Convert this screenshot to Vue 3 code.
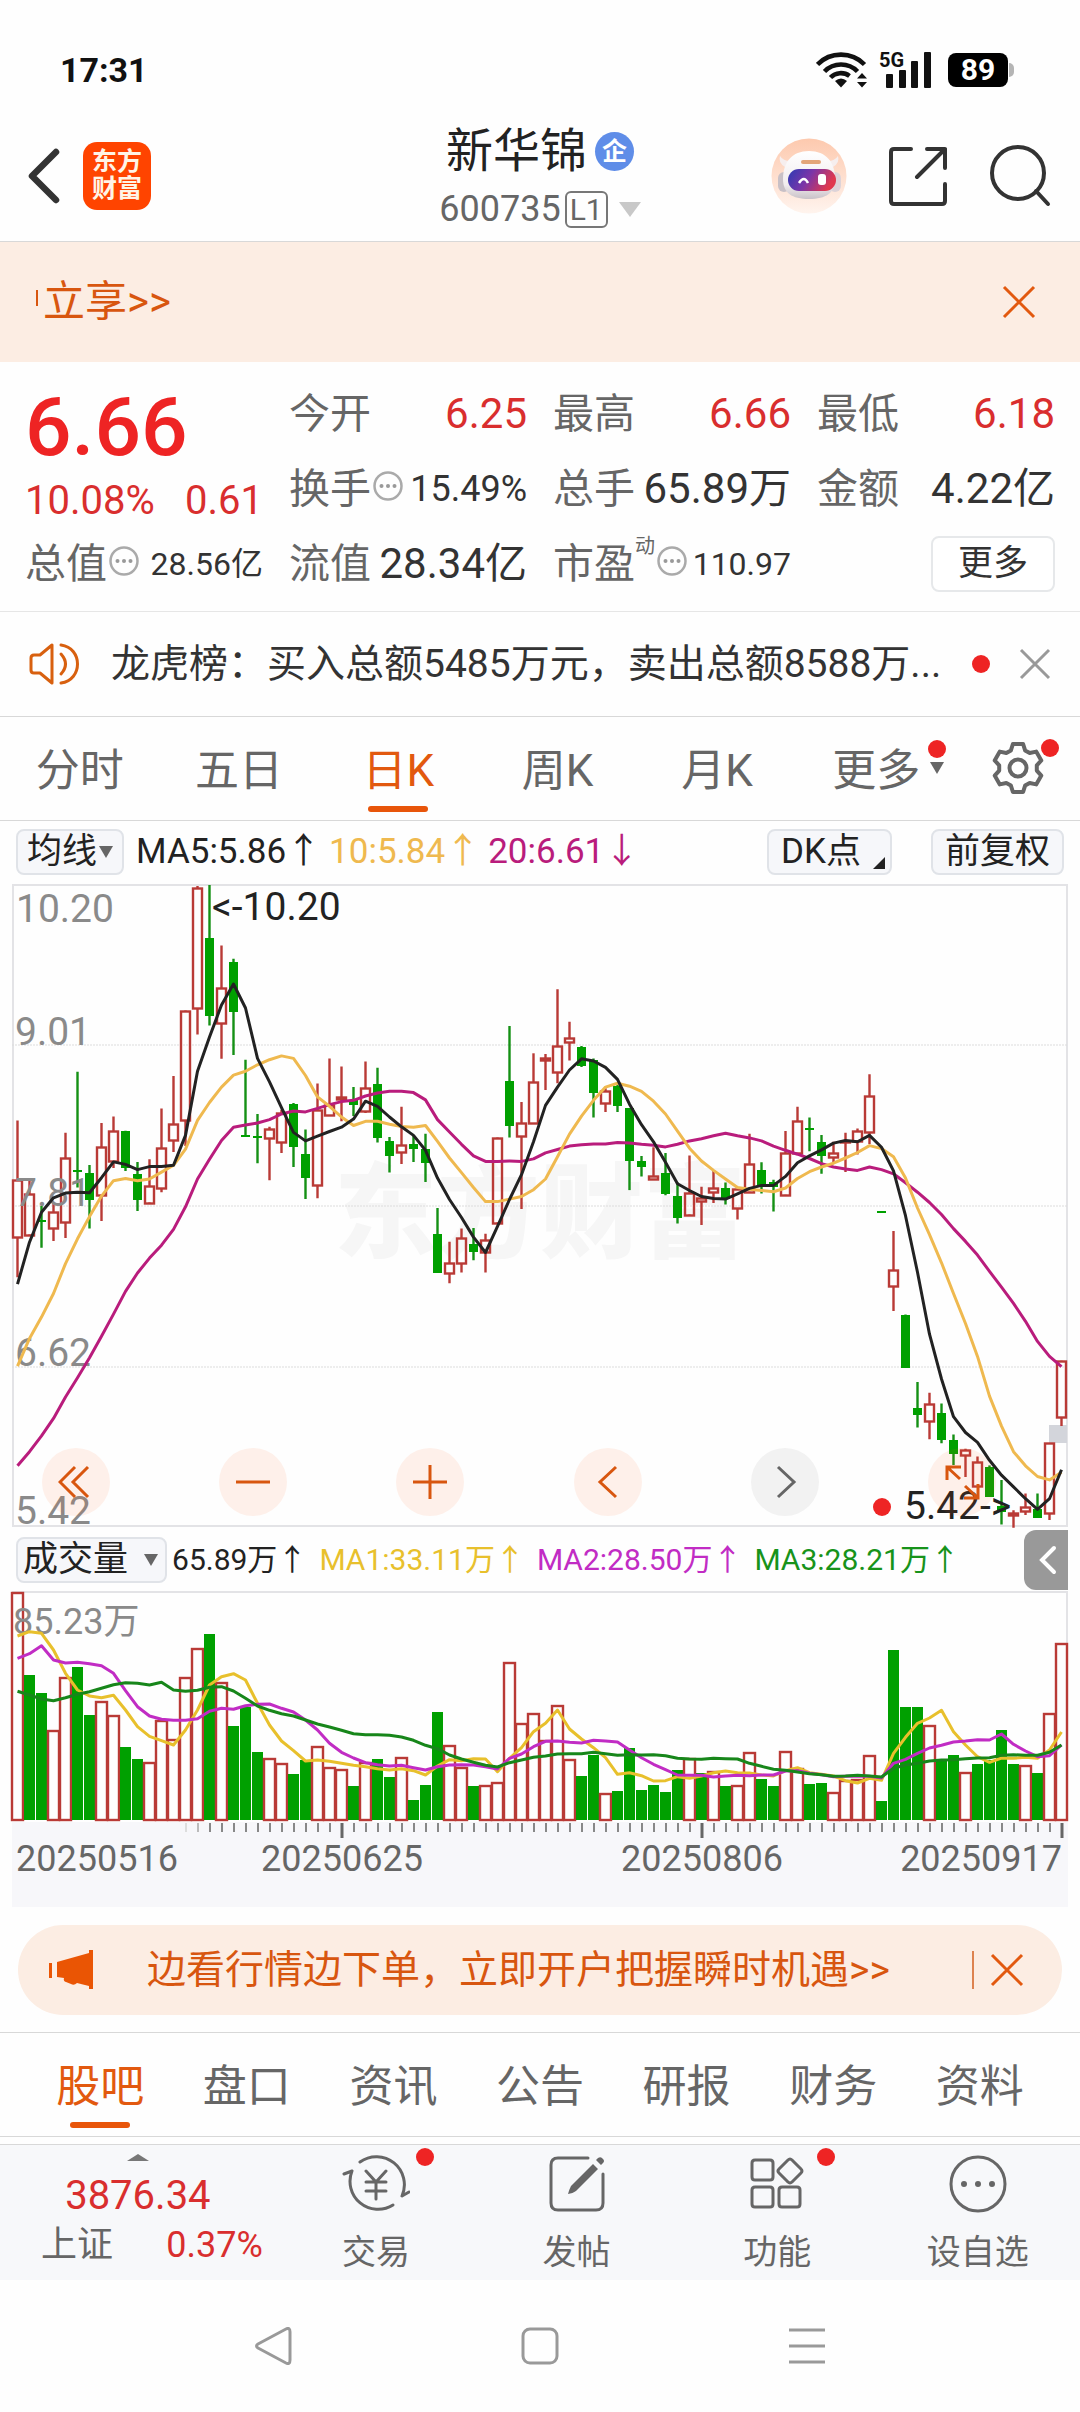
<template>
  <div class="page">
    <header class="status">
      <span class="time">17:31</span>
      <div class="status-icons">
        <svg class="wifi" width="52" height="36" viewBox="0 0 52 36" fill="none" stroke="#111" stroke-width="4.6">
          <path d="M1.5 12.5a33 33 0 0 1 47 0" />
          <path d="M8.5 19.5a23 23 0 0 1 33 0" />
          <path d="M14.5 25.5a14.500 14.500 0 0 1 19-1.500" />
          <path d="M25 35.500l-6-6.500q6-5 12 0z" fill="#111" stroke="none" />
          <path d="M46 21l5 5.500h-10zM46 35.500l5-5.500h-10z" fill="#111" stroke="none" />
        </svg>
        <div class="signal">
          <span class="net">5G</span>
          <svg width="52" height="38" viewBox="0 0 52 38" fill="#111">
            <rect x="6" y="23" width="7" height="14" rx="1" />
            <rect x="19" y="19" width="7" height="18" rx="1" />
            <rect x="31" y="10" width="7" height="27" rx="1" />
            <rect x="44" y="1" width="7" height="36" rx="1" />
          </svg>
        </div>
        <span class="battery">89</span>
      </div>
    </header>

    <div class="header">
      <div class="header-left">
        <button class="plain" aria-label="返回">
          <svg width="36" height="60" viewBox="0 0 36 60" fill="none" stroke="#333" stroke-width="6.500" stroke-linecap="round" stroke-linejoin="round">
            <path d="M31 6L7 30l24 24" />
          </svg>
        </button>
        <a class="logo" href="#"><span>东方</span><span>财富</span></a>
      </div>
      <div class="title">
        <h1>新华锦<span class="badge">企</span></h1>
        <button class="plain code">600735<span class="level">L1</span><i class="caret light"></i></button>
      </div>
      <div class="header-right">
        <button class="plain" aria-label="助手">
          <svg width="76" height="76" viewBox="0 0 76 76">
            <defs>
              <linearGradient id="halo" x1="0" y1="0" x2="0" y2="1">
                <stop offset="0" stop-color="#fdc9ae" />
                <stop offset="1" stop-color="#fff4ee" />
              </linearGradient>
              <linearGradient id="visor" x1="0" y1="0" x2="1" y2="0.300">
                <stop offset="0" stop-color="#2c3bb4" />
                <stop offset="0.500" stop-color="#7b35a8" />
                <stop offset="1" stop-color="#e0384e" />
              </linearGradient>
              <linearGradient id="shell" x1="0" y1="0" x2="0" y2="1">
                <stop offset="0" stop-color="#ffffff" />
                <stop offset="0.700" stop-color="#f1ecee" />
                <stop offset="1" stop-color="#c9c2c8" />
              </linearGradient>
            </defs>
            <circle cx="38" cy="38" r="37.500" fill="url(#halo)" />
            <path d="M9 18q-2 7 5 11l7-6q-8 1-12-5zM67 18q2 7-5 11l-7-6q8 1 12-5z" fill="#f6eeee" />
            <rect x="7" y="34" width="12" height="20" rx="6" fill="#c8c0c6" />
            <rect x="58" y="34" width="12" height="20" rx="6" fill="#ddd3d8" />
            <path d="M38 13c17 0 26 11 26 28 0 14-9 20-26 20s-26-6-26-20c0-17 9-28 26-28z" fill="url(#shell)" />
            <rect x="17" y="31" width="48" height="22" rx="11" fill="url(#visor)" />
            <rect x="30" y="22" width="20" height="4" rx="2" fill="#e3a679" />
            <path d="M28 45q5-8 9 0" fill="none" stroke="#fff" stroke-width="2.500" />
            <rect x="47" y="36" width="8" height="11" rx="3" fill="#fff" />
          </svg>
        </button>
        <button class="plain" aria-label="分享">
          <svg width="58" height="60" viewBox="0 0 58 60" fill="none" stroke="#333" stroke-width="4" stroke-linecap="round" stroke-linejoin="round">
            <path d="M22 3H5q-3 0-3 3v49q0 3 3 3h48q3 0 3-3V38M38 3h18v19M56 3L28 31" />
          </svg>
        </button>
        <button class="plain" aria-label="搜索">
          <svg width="62" height="62" viewBox="0 0 62 62" fill="none" stroke="#333" stroke-width="4" stroke-linecap="round">
            <circle cx="29" cy="28" r="26" />
            <path d="M47 46l12 13" />
          </svg>
        </button>
      </div>
    </div>

    <div class="banner">
      <a href="#" class="banner-text"><i class="stub"></i>立享&gt;&gt;</a>
      <button class="plain" aria-label="关闭">
        <svg width="34" height="34" viewBox="0 0 34 34" fill="none" stroke="#e2590f" stroke-width="3"><path d="M2 2l30 30M32 2L2 32" /></svg>
      </button>
    </div>

    <section class="quote">
      <div class="price-box">
        <strong class="price">6.66</strong>
        <div class="change"><span>10.08%</span><span>0.61</span></div>
      </div>
      <div v-for="item in quotes" :key="item.label" class="cell">
        <span class="label">{{ item.label }}<sup v-if="item.sup">{{ item.sup }}</sup>
          <svg v-if="item.tip" width="30" height="30" viewBox="0 0 30 30" fill="none" stroke="#aaa" stroke-width="2.500">
            <circle cx="15" cy="15" r="13.500" />
            <g fill="#999" stroke="none"><circle cx="8.500" cy="15" r="2" /><circle cx="15" cy="15" r="2" /><circle cx="21.500" cy="15" r="2" /></g>
          </svg>
        </span>
        <span class="value" :class="[item.size, { up: item.up }]">{{ item.value }}</span>
      </div>
      <button class="more">更多</button>
    </section>

    <div class="news">
      <svg width="52" height="44" viewBox="0 0 52 44" fill="none" stroke="#d8600f" stroke-width="3" stroke-linejoin="round" stroke-linecap="round">
        <path d="M23 3v38L11 31H5q-3 0-3-3V16q0-3 3-3h6z" />
        <path d="M32 12q9 10 0 20M32 3c22 3 22 35 0 38" />
      </svg>
      <a href="#" class="news-text">龙虎榜：买入总额5485万元，卖出总额8588万...</a>
      <i class="dot"></i>
      <button class="plain" aria-label="关闭">
        <svg width="32" height="32" viewBox="0 0 32 32" fill="none" stroke="#999" stroke-width="3"><path d="M2 2l28 28M30 2L2 30" /></svg>
      </button>
    </div>

    <nav class="periods">
      <button v-for="p in periods" :key="p" class="plain tab" :class="{ active: p === period }" @click="period = p">
        <span class="tab-text">{{ p }}<template v-if="p === '更多'"><i class="caret drop"></i><i class="dot over"></i></template></span>
      </button>
      <button class="plain tab gear" aria-label="设置">
        <svg width="56" height="56" viewBox="-28 -28 56 56" fill="none" stroke="#666" stroke-width="4" stroke-linejoin="round">
          <path :d="gearPath" />
          <circle r="8.500" />
        </svg>
        <i class="dot over"></i>
      </button>
    </nav>

    <div class="indicator">
      <button class="chip slim">均线<i class="caret small"></i></button>
      <div class="ma">
        <span>MA5:5.86↑</span><span class="ma10">10:5.84↑</span><span class="ma20">20:6.61↓</span>
      </div>
      <button class="chip corner">DK点</button>
      <button class="chip">前复权</button>
    </div>

    <div class="chart">
      <svg class="plot" viewBox="0 0 1056 643">
        <text class="watermark" x="322" y="366">东方财富</text>
        <rect x="1" y="1" width="1054" height="641" fill="none" stroke="#e3e3e6" stroke-width="2" />
        <line v-for="n in 3" :key="n" x1="0" x2="1056" :y1="n * 161" :y2="n * 161" stroke="#dcdcdc" stroke-width="1" stroke-dasharray="2 1" />
        <rect x="1037" y="541" width="18" height="18" fill="#d3d5db" />
        <g v-for="(c, i) in candles" :key="i" :class="c.up ? 'rise' : 'fall'">
          <path class="stem" :d="c.stem" />
          <rect :x="c.x" :y="c.y" :width="c.w" :height="c.h" />
        </g>
        <g class="axis-text">
          <text x="4" y="38">10.20</text>
          <text x="3" y="161">9.01</text>
          <text x="3" y="322">7.81</text>
          <text x="3" y="482">6.62</text>
          <text x="3" y="640">5.42</text>
        </g>
        <polyline class="line" :points="toPoints(ma20, priceY)" stroke="#b91c7c" />
        <polyline class="line" :points="toPoints(ma10, priceY)" stroke="#efb94f" />
        <polyline class="line" :points="toPoints(ma5, priceY)" stroke="#222" />
        <g class="mark-text">
          <text x="200" y="36">&lt;-10.20</text>
          <text x="892" y="635">5.42-&gt;</text>
        </g>
        <circle cx="870" cy="623" r="9" fill="#ee2424" />
      </svg>
      <div class="tools">
        <button v-for="t in tools" :key="t.name" class="tool" :class="{ off: t.off }" :aria-label="t.name">
          <svg width="36" height="36" viewBox="0 0 36 36" fill="none" stroke="currentColor" stroke-width="3"><path :d="t.d" /></svg>
        </button>
      </div>
    </div>

    <div class="volume-bar">
      <button class="chip wide">成交量<i class="caret small"></i></button>
      <div class="vol-ma">
        <span>65.89万↑</span><span class="v1">MA1:33.11万↑</span><span class="v2">MA2:28.50万↑</span><span class="v3">MA3:28.21万↑</span>
      </div>
      <button class="fold" aria-label="收起">
        <svg width="20" height="30" viewBox="0 0 20 30" fill="none" stroke="#fff" stroke-width="4" stroke-linecap="round"><path d="M16 3L4 15l12 12" /></svg>
      </button>
    </div>

    <div class="chart">
      <svg class="plot" viewBox="0 0 1056 316">
        <path d="M0 1H1055V230" fill="none" stroke="#e3e3e6" stroke-width="2" />
        <rect x="0" y="231" width="1056" height="85" fill="#f7f7fa" />
        <g v-for="(b, i) in bars" :key="i" :class="b.up ? 'rise' : 'fall'">
          <rect :x="b.x" :y="b.y" :width="b.w" :height="b.h" />
        </g>
        <text class="vol-text" x="1" y="43">85.23万</text>
        <polyline class="line" :points="toPoints(volMa1, volumeY)" stroke="#e8c02c" />
        <polyline class="line" :points="toPoints(volMa2, volumeY)" stroke="#c12cc4" />
        <polyline class="line" :points="toPoints(volMa3, volumeY)" stroke="#17861a" />
        <path v-for="t in ticks" :key="t.x" :d="t.d" :stroke="t.color" :stroke-width="t.width" />
        <g class="date-text">
          <text x="4" y="280">20250516</text>
          <text x="330" y="280" text-anchor="middle">20250625</text>
          <text x="690" y="280" text-anchor="middle">20250806</text>
          <text x="1050" y="280" text-anchor="end">20250917</text>
        </g>
      </svg>
    </div>

    <div class="promo">
      <svg width="48" height="40" viewBox="0 0 48 40" fill="#ea5504">
        <rect x="1" y="13" width="3" height="15" />
        <path d="M9 12L41 3V0h4v39h-4v-3l-12-3q-3 3-6 1l-5-2q-3-1-2-4l-7-1z" />
      </svg>
      <a href="#">边看行情边下单，立即开户把握瞬时机遇&gt;&gt;</a>
      <button class="plain promo-close" aria-label="关闭">
        <svg width="34" height="34" viewBox="0 0 34 34" fill="none" stroke="#e2590f" stroke-width="3"><path d="M2 2l30 30M32 2L2 32" /></svg>
      </button>
    </div>

    <nav class="sections">
      <button v-for="s in sections" :key="s" class="plain tab" :class="{ active: s === section }" @click="section = s">
        <span class="tab-text">{{ s }}</span>
      </button>
    </nav>

    <footer class="bottom">
      <a href="#" class="index">
        <i class="caret-up"></i>
        <span class="index-value">3876.34</span>
        <span class="index-row"><span>上证</span><span class="up">0.37%</span></span>
      </a>
      <a v-for="a in actions" :key="a.label" href="#" class="action">
        <svg width="68" height="60" viewBox="0 0 68 60" fill="none" stroke="#666" stroke-width="3" stroke-linecap="round" stroke-linejoin="round">
          <path :d="a.d" />
          <path v-if="a.fill" :d="a.fill" fill="#666" stroke="none" />
        </svg>
        <span>{{ a.label }}</span>
        <i v-if="a.dot" class="dot over"></i>
      </a>
    </footer>

    <nav class="system">
      <button class="plain" aria-label="后退">
        <svg width="38" height="38" viewBox="0 0 38 38" fill="none" stroke="#999" stroke-width="3" stroke-linejoin="round"><path d="M32 2q4-2 4 3v28q0 5-4 3L4 21q-3-2 0-4z" /></svg>
      </button>
      <button class="plain" aria-label="主页">
        <svg width="38" height="38" viewBox="0 0 38 38" fill="none" stroke="#999" stroke-width="3"><rect x="2" y="2" width="34" height="34" rx="7" /></svg>
      </button>
      <button class="plain" aria-label="任务">
        <svg width="38" height="38" viewBox="0 0 38 38" fill="none" stroke="#999" stroke-width="3"><path d="M1 3h36M1 19h36M1 35h36" /></svg>
      </button>
    </nav>
  </div>
</template>

<script setup>
import { ref } from 'vue'

const period = ref('日K')
const section = ref('股吧')
const periods = ['分时', '五日', '日K', '周K', '月K', '更多']
const sections = ['股吧', '盘口', '资讯', '公告', '研报', '财务', '资料']

const quotes = [
  { label: '今开', value: '6.25', up: true },
  { label: '最高', value: '6.66', up: true },
  { label: '最低', value: '6.18', up: true },
  { label: '换手', value: '15.49%', tip: true, size: 'mid' },
  { label: '总手', value: '65.89万' },
  { label: '金额', value: '4.22亿' },
  { label: '总值', value: '28.56亿', tip: true, size: 'small' },
  { label: '流值', value: '28.34亿' },
  { label: '市盈', value: '110.97', sup: '动', tip: true, size: 'small' }
]

const tools = [
  { name: '最左', d: 'M17 3L2 18l15 15M30 3L15 18l15 15' },
  { name: '缩小', d: 'M1 18h34' },
  { name: '放大', d: 'M1 18h34M18 1v34' },
  { name: '左移', d: 'M26 3L10 18l16 15' },
  { name: '右移', d: 'M11 3l16 15L11 33', off: true },
  { name: '全屏', d: 'M3 16V3h14M3 3l13 12M34 20v14H20M34 34L21 22' }
]

const actions = [
  {
    label: '交易',
    dot: true,
    d: 'M18 8A28 28 0 0 1 60 42l7-4M51 51A28 28 0 0 1 10 17l-8 3M24 17l10 11l10-11M24 28h20M24 37h20M34 28v17'
  },
  {
    label: '发帖',
    d: 'M45 4H15q-7 0-7 7v38q0 7 7 7h38q7 0 7-7V20',
    fill: 'M50 10l5 5L33 37q-4 3-8 3q1-4 3-8zM53 6l2-2q3-2 5 1q2 2 0 4l-2 2z'
  },
  {
    label: '功能',
    dot: true,
    d: 'M12 6h15q3 0 3 3v14q0 3-3 3H12q-3 0-3-3V9q0-3 3-3zM12 33h15q3 0 3 3v14q0 3-3 3H12q-3 0-3-3V36q0-3 3-3zM39 33h15q3 0 3 3v14q0 3-3 3H39q-3 0-3-3V36q0-3 3-3zM45 6q2-2 4 0l9 9q2 2 0 4l-9 9q-2 2-4 0l-9-9q-2-2 0-4z'
  },
  {
    label: '设自选',
    d: 'M34 3a27 27 0 1 1 0 54a27 27 0 1 1 0-54z',
    fill: 'M20 27a3 3 0 1 1 0 6a3 3 0 1 1 0-6zM34 27a3 3 0 1 1 0 6a3 3 0 1 1 0-6zM48 27a3 3 0 1 1 0 6a3 3 0 1 1 0-6z'
  }
]

// [涨跌, 最高, 实体上沿, 实体下沿, 最低]
const kline = [
  [1, 585, 725, 857, 952], [1, 725, 757, 852, 852], [0, 785, 817, 822, 883], [1, 780, 798, 836, 867],
  [1, 614, 673, 823, 860], [0, 471, 700, 706, 742], [0, 689, 709, 772, 838], [1, 591, 648, 759, 820],
  [1, 576, 609, 679, 696], [0, 609, 610, 696, 703], [0, 682, 711, 772, 797], [1, 676, 739, 777, 777],
  [1, 557, 650, 742, 753], [1, 481, 594, 631, 659], [1, 328, 328, 584, 645], [1, 37, 42, 323, 384],
  [0, 34, 159, 341, 363], [1, 176, 275, 357, 441], [0, 207, 215, 331, 432], [0, 443, 620, 624, 624],
  [0, 570, 622, 626, 685], [1, 600, 606, 626, 725], [1, 560, 567, 635, 661], [0, 544, 547, 646, 694],
  [0, 606, 664, 719, 769], [1, 499, 560, 737, 767], [1, 440, 548, 573, 573], [1, 459, 530, 535, 587],
  [0, 507, 537, 548, 575], [1, 447, 508, 563, 568], [0, 462, 499, 625, 637], [0, 624, 632, 668, 707],
  [1, 553, 643, 658, 687], [0, 620, 640, 652, 682], [0, 616, 651, 685, 729], [0, 790, 850, 941, 941],
  [1, 869, 918, 941, 966], [1, 838, 861, 919, 941], [0, 837, 873, 893, 912], [1, 850, 865, 893, 941],
  [1, 625, 625, 824, 824], [0, 364, 493, 597, 625], [1, 542, 590, 622, 792], [1, 428, 495, 591, 591],
  [1, 430, 440, 444, 514], [1, 278, 410, 471, 498], [1, 354, 391, 402, 445], [0, 411, 412, 458, 460],
  [0, 440, 443, 520, 578], [1, 510, 517, 545, 565], [0, 498, 505, 551, 565], [0, 556, 557, 679, 748],
  [0, 668, 681, 694, 716], [1, 648, 716, 723, 723], [0, 661, 708, 756, 760], [0, 730, 762, 814, 826],
  [1, 667, 754, 805, 805], [1, 740, 767, 774, 830], [1, 703, 742, 752, 778], [0, 730, 743, 769, 782],
  [1, 745, 745, 789, 817], [1, 616, 688, 752, 752], [0, 683, 702, 735, 756], [0, 724, 728, 740, 798],
  [1, 610, 662, 759, 759], [1, 553, 587, 662, 662], [0, 578, 602, 607, 657], [0, 619, 635, 668, 710],
  [1, 635, 660, 670, 682], [1, 614, 632, 636, 706], [1, 604, 609, 632, 665], [1, 477, 527, 613, 640],
  [0, 797, 797, 801, 801], [1, 844, 934, 972, 1031], [0, 1039, 1039, 1164, 1164], [0, 1197, 1257, 1273, 1303],
  [1, 1222, 1249, 1287, 1331], [0, 1247, 1269, 1333, 1340], [0, 1320, 1332, 1365, 1391], [1, 1353, 1357, 1367, 1419],
  [1, 1371, 1385, 1441, 1441], [0, 1392, 1396, 1466, 1466], [0, 1426, 1486, 1500, 1530], [1, 1497, 1503, 1508, 1538],
  [1, 1458, 1490, 1498, 1508], [0, 1458, 1495, 1514, 1514], [1, 1340, 1340, 1503, 1520], [1, 1147, 1147, 1278, 1300]
]

const ma5 = [968, 870, 800, 766, 755, 753, 754, 719, 682, 688, 700, 693, 693, 690, 620, 470, 390, 315, 266, 322, 440, 495, 555, 613, 633, 622, 611, 601, 582, 540, 552, 577, 600, 620, 655, 720, 770, 812, 858, 894, 833, 770, 712, 635, 550, 507, 467, 441, 446, 461, 489, 547, 595, 635, 683, 733, 749, 763, 768, 769, 757, 744, 737, 737, 716, 684, 668, 654, 638, 632, 635, 620, 648, 703, 808, 940, 1085, 1190, 1278, 1315, 1338, 1380, 1415, 1442, 1470, 1495, 1470, 1402]
const ma10 = [1160, 1095, 1045, 990, 920, 862, 810, 762, 726, 721, 726, 722, 706, 690, 652, 585, 543, 507, 479, 470, 455, 443, 434, 440, 480, 530, 552, 577, 597, 587, 587, 594, 599, 601, 597, 634, 673, 707, 742, 775, 775, 769, 763, 747, 722, 670, 617, 575, 538, 507, 498, 505, 517, 540, 570, 610, 650, 680, 702, 722, 742, 746, 749, 752, 743, 721, 705, 694, 685, 673, 660, 644, 651, 670, 720, 790, 852, 918, 990, 1060, 1137, 1230, 1300, 1360, 1393, 1418, 1426, 1408]
const ma20 = [1393, 1360, 1323, 1282, 1232, 1187, 1140, 1090, 1038, 985, 942, 907, 877, 840, 787, 722, 676, 632, 601, 596, 591, 583, 570, 563, 565, 557, 548, 541, 538, 528, 521, 517, 517, 520, 537, 583, 612, 641, 668, 681, 681, 680, 681, 675, 661, 653, 645, 642, 640, 640, 637, 638, 641, 643, 647, 641, 633, 628, 621, 615, 621, 626, 633, 645, 655, 664, 674, 686, 694, 699, 702, 694, 700, 710, 731, 753, 777, 805, 838, 868, 900, 938, 975, 1013, 1055, 1102, 1137, 1161]

// 正数为涨，负数为跌
const volumes = [185, -435, -490, 600, 442, -411, -555, 514, 554, -651, -686, 696, 571, 626, 440, 355, -313, 456, -589, -530, -666, 684, 699, -732, -690, 647, 711, 717, -769, 695, -686, -740, 680, -810, -765, -545, 644, 711, -769, 765, 757, 397, 580, 550, 629, 526, 686, -737, -675, 790, -783, -655, -780, -766, -786, -721, 685, -728, 722, -769, 766, 666, -748, -767, 662, 714, -763, -760, 786, 750, 748, 675, -813, -359, -530, -532, 585, -694, -676, 727, -703, -690, -601, -703, 704, -729, 550, 340]
const volMa1 = [318, 305, 310, 360, 430, 480, 498, 503, 496, 540, 590, 619, 632, 645, 600, 540, 465, 440, 431, 450, 520, 585, 633, 662, 693, 690, 694, 700, 706, 710, 716, 720, 716, 722, 735, 708, 689, 692, 686, 687, 725, 685, 653, 605, 580, 540, 597, 627, 653, 683, 733, 728, 737, 753, 752, 740, 745, 738, 728, 723, 728, 729, 735, 738, 722, 713, 728, 733, 738, 752, 759, 745, 751, 670, 622, 580, 564, 541, 605, 645, 680, 697, 684, 685, 682, 685, 660, 606]
const volMa2 = [385, 371, 347, 390, 399, 397, 401, 407, 430, 482, 530, 558, 568, 571, 571, 566, 544, 535, 538, 527, 523, 522, 535, 546, 570, 600, 640, 667, 684, 698, 704, 708, 706, 713, 720, 710, 705, 704, 705, 710, 717, 685, 672, 650, 634, 633, 637, 639, 631, 633, 636, 660, 683, 703, 719, 735, 736, 736, 741, 738, 736, 737, 735, 735, 723, 722, 730, 734, 740, 739, 738, 739, 744, 700, 688, 670, 654, 646, 636, 633, 629, 630, 612, 643, 663, 680, 677, 645]
const volMa3 = [484, 495, 507, 512, 503, 493, 485, 475, 464, 458, 460, 465, 457, 480, 484, 481, 472, 470, 483, 505, 528, 541, 551, 558, 570, 582, 591, 601, 611, 614, 614, 616, 621, 631, 646, 656, 675, 687, 697, 706, 711, 698, 690, 682, 678, 672, 671, 671, 667, 671, 676, 674, 675, 674, 677, 685, 687, 688, 685, 686, 687, 700, 709, 718, 721, 726, 731, 734, 739, 738, 736, 738, 741, 715, 705, 700, 693, 690, 689, 686, 684, 683, 676, 674, 676, 676, 667, 645]

const step = 12
const slotX = (i) => 5.5 + i * step
const priceY = (v) => Math.round((v - 32) * 4.275) / 10
const volumeY = (v) => Math.round((v - 183) / 0.3) / 10

function toPoints(list, scale) {
  return list.map((v, i) => `${slotX(i)},${scale(v)}`).join(' ')
}

const candles = kline.map(([up, high, top, bottom, low], i) => {
  const x = slotX(i)
  const t = Math.round(priceY(top))
  const b = Math.round(priceY(bottom))
  return {
    up,
    stem: `M${x} ${priceY(high)}V${t}M${x} ${b}V${priceY(low)}`,
    // 阳线空心，描边占 1px
    x: x - 4.5,
    y: up ? t + 0.5 : t,
    w: 9,
    h: Math.max(b - t, up ? 1 : 2)
  }
})

const bars = volumes.map((v, i) => {
  const up = v > 0
  const y = Math.round(volumeY(Math.abs(v)))
  return {
    up,
    x: slotX(i) - 5.5,
    y: up ? y + 1 : y,
    w: 11,
    h: (up ? 228 : 229) - y
  }
})

const ticks = []
for (let i = 14; i < 88; i++) {
  const major = i % 30 === 27
  const x = 6 + i * step
  ticks.push({
    x,
    d: `M${x} 232V${major ? 247 : 241}`,
    width: major ? 3 : 2,
    color: i === 14 ? '#ddd' : i === 15 ? '#bbb' : major ? '#666' : '#888'
  })
}

const gearPath = (() => {
  const pts = []
  const at = (deg, r) => {
    const a = (deg - 90) * Math.PI / 180
    pts.push(`${(Math.cos(a) * r).toFixed(1)} ${(Math.sin(a) * r).toFixed(1)}`)
  }
  for (let k = 0; k < 360; k += 60) {
    at(k - 22, 19)
    at(k - 12, 24.5)
    at(k + 12, 24.5)
    at(k + 22, 19)
  }
  return `M${pts.join('L')}Z`
})()
</script>

<style>
body {
  margin: 0;
  background: #fefefe;
}
</style>

<style scoped>
.page {
  font-family: Roboto, 'Noto Sans CJK SC', sans-serif;
  color: #333;
  background: #fefefe;
}
.page i {
  display: block;
  flex: none;
}
.page svg {
  display: block;
  flex: none;
}
a {
  color: inherit;
  text-decoration: none;
}
button {
  font: inherit;
  color: inherit;
  cursor: pointer;
}
.plain {
  padding: 0;
  border: 0;
  background: none;
}
.dot {
  width: 18px;
  height: 18px;
  border-radius: 50%;
  background: #ee2424;
}
.dot.over {
  position: absolute;
}
.caret {
  border: 7px solid transparent;
  border-top: 12px solid #666;
  border-bottom: 0;
}
.caret.light {
  border-width: 15px 11px 0;
  border-top-color: #c8c8c8;
}
.up {
  color: #d92e2e;
}

.status {
  display: flex;
  justify-content: space-between;
  align-items: center;
  padding: 46px 67px 0 60px;
  line-height: 48px;
}
.time {
  font-size: 34px;
  font-weight: 700;
  color: #111;
}
.status-icons {
  display: flex;
  align-items: center;
  gap: 12px;
}
.signal {
  position: relative;
}
.net {
  position: absolute;
  left: -1px;
  top: 0;
  font-size: 20px;
  line-height: 18px;
  font-weight: 700;
  color: #111;
}
.battery {
  position: relative;
  width: 60px;
  margin-left: 4px;
  margin-right: 5px;
  border-radius: 8px;
  background: #000;
  color: #fff;
  font-size: 30px;
  font-weight: 700;
  line-height: 34px;
  text-align: center;
}
.battery::after {
  content: '';
  position: absolute;
  right: -6px;
  top: 10px;
  width: 5px;
  height: 14px;
  border-radius: 0 5px 5px 0;
  background: #b5b5b5;
}

.header {
  display: grid;
  grid-template-columns: 1fr auto 1fr;
  align-items: center;
  padding: 29px 29px 13px 25px;
  border-bottom: 1px solid #d8d8d8;
}
.header-left,
.header-right {
  display: flex;
  align-items: center;
}
.header-left {
  gap: 22px;
}
.header-right {
  justify-content: flex-end;
  gap: 42px;
}
.logo {
  display: flex;
  flex-direction: column;
  align-items: center;
  padding: 6px 9px 8px;
  border-radius: 14px;
  background: #ff4400;
  color: #fff4e6;
  font-size: 25px;
  font-weight: 700;
  line-height: 27px;
}
.title {
  display: flex;
  flex-direction: column;
  align-items: center;
  gap: 11px;
  padding-left: 4px;
}
h1 {
  display: flex;
  align-items: center;
  gap: 8px;
  margin: 0;
  font-size: 47px;
  font-weight: 400;
  line-height: 56px;
  color: #222;
}
.badge {
  width: 39px;
  border-radius: 50%;
  background: #5f8de8;
  color: #fff;
  font-size: 25px;
  font-weight: 700;
  line-height: 39px;
  text-align: center;
}
.code {
  display: flex;
  align-items: center;
  font-size: 36px;
  line-height: 38px;
  color: #666;
}
.level {
  margin: 0 11px 0 4px;
  padding: 0 3px;
  border: 2px solid #777;
  border-radius: 6px;
  font-size: 30px;
  line-height: 33px;
}

.banner {
  display: flex;
  justify-content: space-between;
  align-items: center;
  padding: 30px 44px 30px 36px;
  background: #fcede3;
}
.banner-text {
  display: flex;
  gap: 5px;
  font-size: 42px;
  line-height: 60px;
  color: #d8560f;
}
.stub {
  width: 2px;
  height: 16px;
  margin-top: 18px;
  background: #d8560f;
}

.quote {
  display: grid;
  grid-template-columns: repeat(4, 1fr);
  grid-auto-rows: 75px;
  column-gap: 26px;
  padding: 14px 25px 10px;
  border-bottom: 1px solid #e6e6e6;
}
.price-box {
  grid-row: span 2;
}
.price {
  display: block;
  font-size: 82px;
  font-weight: 500;
  line-height: 102px;
  color: #ee2424;
}
.change {
  display: flex;
  justify-content: space-between;
  font-size: 40px;
  line-height: 46px;
  color: #d92e2e;
}
.cell {
  display: flex;
  justify-content: space-between;
  align-items: center;
  white-space: nowrap;
}
.label {
  display: flex;
  align-items: center;
  font-size: 41px;
  line-height: 60px;
  color: #666;
}
.label svg {
  margin: 0 0 6px 2px;
}
.label sup {
  align-self: flex-start;
  font-size: 20px;
  line-height: 24px;
}
.value {
  font-size: 42px;
  line-height: 56px;
}
.value.mid {
  font-size: 36px;
}
.value.small {
  font-size: 32px;
}
.more {
  justify-self: end;
  align-self: center;
  padding: 0 25px;
  border: 2px solid #e6e8ea;
  border-radius: 8px;
  background: #fff;
  font-size: 35px;
  line-height: 52px;
}

.news {
  display: flex;
  align-items: center;
  padding: 22px 29px 22px 29px;
  border-bottom: 1px solid #d8d8d8;
}
.news-text {
  flex: 1;
  padding-left: 30px;
  font-size: 39px;
  line-height: 60px;
}
.news .plain {
  margin-left: 29px;
}

.periods,
.sections {
  display: flex;
  border-bottom: 1px solid #d8d8d8;
}
.tab {
  position: relative;
  flex: 1;
  display: flex;
  justify-content: center;
  align-items: center;
  padding: 23px 0 18px;
  font-size: 44px;
  line-height: 62px;
  color: #666;
}
.tab-text {
  position: relative;
}
.tab.active {
  color: #e2590f;
}
.tab.active::after {
  content: '';
  position: absolute;
  left: calc(50% - 30px);
  bottom: 8px;
  width: 60px;
  height: 6px;
  border-radius: 3px;
  background: #e8550a;
}
.tab.gear {
  flex: 0 0 124px;
  padding: 20px 0 21px;
}
.gear .dot {
  left: 85px;
  top: 22px;
}
.caret.drop {
  position: absolute;
  right: -24px;
  top: 22px;
}
.tab-text .dot {
  right: -26px;
  top: 0;
}

.indicator {
  display: flex;
  align-items: center;
  padding: 8px 16px 9px;
  white-space: nowrap;
}
.chip {
  position: relative;
  display: flex;
  align-items: center;
  padding: 0 12px;
  border: 2px solid #e0e3e8;
  border-radius: 8px;
  background: #f6f7fa;
  font-size: 35px;
  line-height: 42px;
  color: #222;
}
.chip.slim {
  gap: 2px;
  padding: 0 9px;
}
.chip.wide {
  padding: 0 7px 0 5px;
  gap: 16px;
  margin-right: 2px;
}
.chip.corner {
  margin-right: 39px;
  padding-right: 29px;
}
.chip.corner::after {
  content: '';
  position: absolute;
  right: 5px;
  bottom: 4px;
  border-left: 12px solid transparent;
  border-bottom: 12px solid #222;
}
.caret.small {
  border-width: 12px 7px 0;
}
.ma {
  flex: 1;
  display: flex;
  gap: 8px;
  padding-left: 12px;
  font-size: 35px;
  line-height: 42px;
  color: #222;
}
.ma10 {
  color: #efb94f;
}
.ma20 {
  color: #b91c7c;
}

.chart {
  position: relative;
  margin: 0 12px;
}
.plot {
  width: 100%;
  height: auto;
  overflow: visible;
}
.watermark {
  font-size: 103px;
  font-weight: 900;
  fill: #f6f6f6;
}
.rise {
  fill: none;
  stroke: #b93a36;
  stroke-width: 2.4;
}
.fall {
  fill: #00a000;
}
.fall .stem {
  stroke: #149014;
  stroke-width: 2.4;
}
.line {
  fill: none;
  stroke-width: 3;
  stroke-linejoin: round;
}
.axis-text {
  font-size: 39px;
  fill: #8a8a8a;
}
.mark-text {
  font-size: 39px;
  fill: #222;
}
.vol-text {
  font-size: 36px;
  fill: #8a8a8a;
}
.date-text {
  font-size: 36px;
  fill: #666;
}
.tools {
  position: absolute;
  left: 30px;
  right: 72px;
  bottom: 11px;
  display: flex;
  justify-content: space-between;
}
.tool {
  display: flex;
  padding: 16px;
  border: 0;
  border-radius: 50%;
  background: rgba(250, 100, 30, 0.09);
  color: #d8560f;
}
.tool.off {
  background: #f2f2f2;
  color: #666;
}

.volume-bar {
  display: flex;
  align-items: center;
  padding: 3px 12px 1px 16px;
  white-space: nowrap;
}
.vol-ma {
  flex: 1;
  display: flex;
  gap: 12px;
  padding-left: 3px;
  font-size: 30px;
  line-height: 42px;
  color: #222;
}
.v1 {
  color: #e8c02c;
}
.v2 {
  color: #c12cc4;
}
.v3 {
  color: #17931a;
}
.fold {
  padding: 15px 10px 15px 14px;
  border: 0;
  border-radius: 12px 0 0 12px;
  background: #999;
}

.promo {
  display: flex;
  align-items: center;
  margin: 18px 18px 17px;
  padding: 15px 38px 15px 30px;
  border-radius: 45px;
  background: #fcede3;
  color: #d8560f;
  font-size: 39px;
  line-height: 60px;
}
.promo a {
  flex: 1;
  padding-left: 51px;
}
.promo-close {
  padding: 2px 0 2px 16px;
  border-left: 2px solid #dd8350;
}

.sections {
  padding: 0 27px;
  border-top: 1px solid #d8d8d8;
}
.bottom {
  display: grid;
  grid-template-columns: 11fr repeat(4, 8fr);
  margin-top: 7px;
  padding-right: 2px;
  border-top: 1px solid #d8d8d8;
  background: #f7f8fa;
}
.index {
  display: flex;
  flex-direction: column;
  align-items: center;
  padding-top: 9px;
  color: #d92e2e;
}
.caret-up {
  border: 11px solid transparent;
  border-bottom: 7px solid #777;
  border-top: 0;
}
.index-value {
  margin-top: 12px;
  font-size: 40px;
  line-height: 46px;
}
.index-row {
  display: flex;
  align-self: stretch;
  justify-content: space-between;
  padding: 0 13px 0 41px;
  font-size: 36px;
  line-height: 52px;
  color: #666;
}
.action {
  position: relative;
  display: flex;
  flex-direction: column;
  align-items: center;
  padding: 9px 0 3px;
  font-size: 34px;
  line-height: 50px;
  color: #666;
}
.action span {
  margin-top: 13px;
}
.action .dot {
  left: calc(50% + 40px);
  top: 3px;
}

.system {
  display: flex;
  padding: 47px 140px;
}
.system .plain {
  flex: 1;
  display: flex;
  justify-content: center;
}
</style>
